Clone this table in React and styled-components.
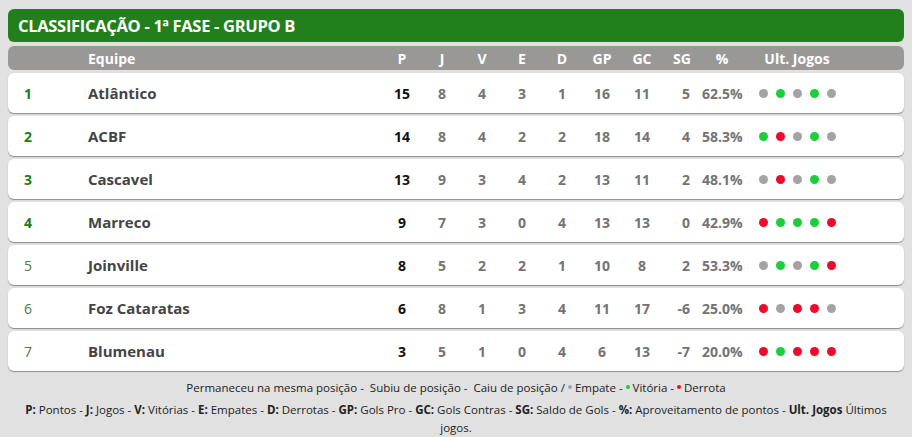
import styled, { createGlobalStyle } from 'styled-components'

const Global = createGlobalStyle`
    body {
        margin: 0;
        background: #e1e1e1;
        font-family: 'Open Sans', 'Noto Sans', sans-serif;
    }
`

// e = empate, v = vitória, d = derrota
const teams = [
    { pos: 1, name: 'Atlântico', p: 15, j: 8, v: 4, e: 3, d: 1, gp: 16, gc: 11, sg: 5, pct: '62.5%', last: 'eveve', strong: true },
    { pos: 2, name: 'ACBF', p: 14, j: 8, v: 4, e: 2, d: 2, gp: 18, gc: 14, sg: 4, pct: '58.3%', last: 'vdeve', strong: true },
    { pos: 3, name: 'Cascavel', p: 13, j: 9, v: 3, e: 4, d: 2, gp: 13, gc: 11, sg: 2, pct: '48.1%', last: 'edeve', strong: true },
    { pos: 4, name: 'Marreco', p: 9, j: 7, v: 3, e: 0, d: 4, gp: 13, gc: 13, sg: 0, pct: '42.9%', last: 'dvvvd', strong: true },
    { pos: 5, name: 'Joinville', p: 8, j: 5, v: 2, e: 2, d: 1, gp: 10, gc: 8, sg: 2, pct: '53.3%', last: 'evevd' },
    { pos: 6, name: 'Foz Cataratas', p: 6, j: 8, v: 1, e: 3, d: 4, gp: 11, gc: 17, sg: -6, pct: '25.0%', last: 'dedde' },
    { pos: 7, name: 'Blumenau', p: 3, j: 5, v: 1, e: 0, d: 4, gp: 6, gc: 13, sg: -7, pct: '20.0%', last: 'dvddd' },
]

const dotColors = { e: '#a3a3a3', v: '#1ccf3a', d: '#ee0a2a' }

const legend = [
    ['P:', 'Pontos'], ['J:', 'Jogos'], ['V:', 'Vitórias'], ['E:', 'Empates'],
    ['D:', 'Derrotas'], ['GP:', 'Gols Pro'], ['GC:', 'Gols Contras'],
    ['SG:', 'Saldo de Gols'], ['%:', 'Aproveitamento de pontos'],
]

export default function App() {
    return (
        <>
            <Global />
            <Page>
                <Title>CLASSIFICAÇÃO - 1ª FASE - GRUPO B</Title>
                <HeadRow>
                    <span />
                    <HeadTeam>Equipe</HeadTeam>
                    {['P', 'J', 'V', 'E', 'D', 'GP', 'GC', 'SG', '%'].map(h => (
                        <HeadCell key={h}>{h}</HeadCell>
                    ))}
                    <HeadCell>Ult. Jogos</HeadCell>
                </HeadRow>
                <Rows>
                    {teams.map(t => (
                        <Row key={t.pos}>
                            <Pos $strong={t.strong}>{t.pos}</Pos>
                            <Team>{t.name}</Team>
                            <Num $main>{t.p}</Num>
                            <Num>{t.j}</Num>
                            <Num>{t.v}</Num>
                            <Num>{t.e}</Num>
                            <Num>{t.d}</Num>
                            <Num>{t.gp}</Num>
                            <Num>{t.gc}</Num>
                            <Num $right>{t.sg}</Num>
                            <Num>{t.pct}</Num>
                            <Dots>
                                {t.last.split('').map((r, i) => (
                                    <Dot key={i} $color={dotColors[r]} />
                                ))}
                            </Dots>
                        </Row>
                    ))}
                </Rows>
                <Legend>
                    <p>
                        Permaneceu na mesma posição -&nbsp; Subiu de posição -&nbsp; Caiu de posição /{' '}
                        <Mini $color={dotColors.e} /> Empate - <Mini $color={dotColors.v} /> Vitória -{' '}
                        <Mini $color={dotColors.d} /> Derrota
                    </p>
                    <p>
                        {legend.map(([k, label]) => (
                            <span key={k}><b>{k}</b> {label} - </span>
                        ))}
                        <b>Ult. Jogos</b> <span>Últimos</span> <span>jogos.</span>
                    </p>
                </Legend>
            </Page>
        </>
    )
}

const Page = styled.div `
    padding: 9px 8px 0;
    display: flex;
    flex-direction: column;
`

const Title = styled.div `
    height: 33px;
    background: #21801b;
    border-radius: 6px;
    color: white;
    font-size: 16.5px;
    font-weight: 700;
    display: flex;
    align-items: center;
    padding-left: 10px;
    letter-spacing: -0.3px;
`

const grid = `
    display: grid;
    grid-template-columns: 64px 1fr repeat(9, 40px) 110px;
    padding: 0 52px 0 16px;
    align-items: center;
`

const HeadRow = styled.div `
    ${grid}
    margin-top: 4px;
    height: 24px;
    background: #9a9797;
    border-radius: 6px;
    color: white;
    font-size: 14px;
    font-weight: 700;
`

const HeadTeam = styled.span `
    text-align: left;
`

const HeadCell = styled.span `
    text-align: center;
    white-space: nowrap;
`

const Rows = styled.div `
    display: flex;
    flex-direction: column;
    gap: 3px;
    margin-top: 3px;
`

const Row = styled.div `
    ${grid}
    height: 40px;
    background: white;
    border-radius: 6px;
    box-shadow: 0 1px 1px #8c8c8c;
    font-size: 14px;
    font-weight: 700;
`

const Pos = styled.span `
    color: ${p => p.$strong ? '#1f7a19' : '#4c7a3c'};
    font-weight: ${p => p.$strong ? 700 : 400};
`

const Team = styled.span `
    color: #444;
    font-size: 15px;
`

const Num = styled.span `
    text-align: ${p => p.$right ? 'right' : 'center'};
    padding-right: ${p => p.$right ? '12px' : '0'};
    color: ${p => p.$main ? '#111' : '#737373'};
    white-space: nowrap;
`

const Dots = styled.span `
    display: flex;
    justify-content: center;
    gap: 8px;
`

const Dot = styled.span `
    width: 9px;
    height: 9px;
    border-radius: 50%;
    background: ${p => p.$color};
`

const Legend = styled.div `
    margin-top: 8px;
    text-align: center;
    font-size: 11.5px;
    color: #222;
    padding: 0 6px;

    p {
        margin: 0 0 4px;
        line-height: 18px;
    }
`

const Mini = styled.span `
    display: inline-block;
    width: 4px;
    height: 4px;
    border-radius: 50%;
    background: ${p => p.$color};
    vertical-align: 3px;
`
